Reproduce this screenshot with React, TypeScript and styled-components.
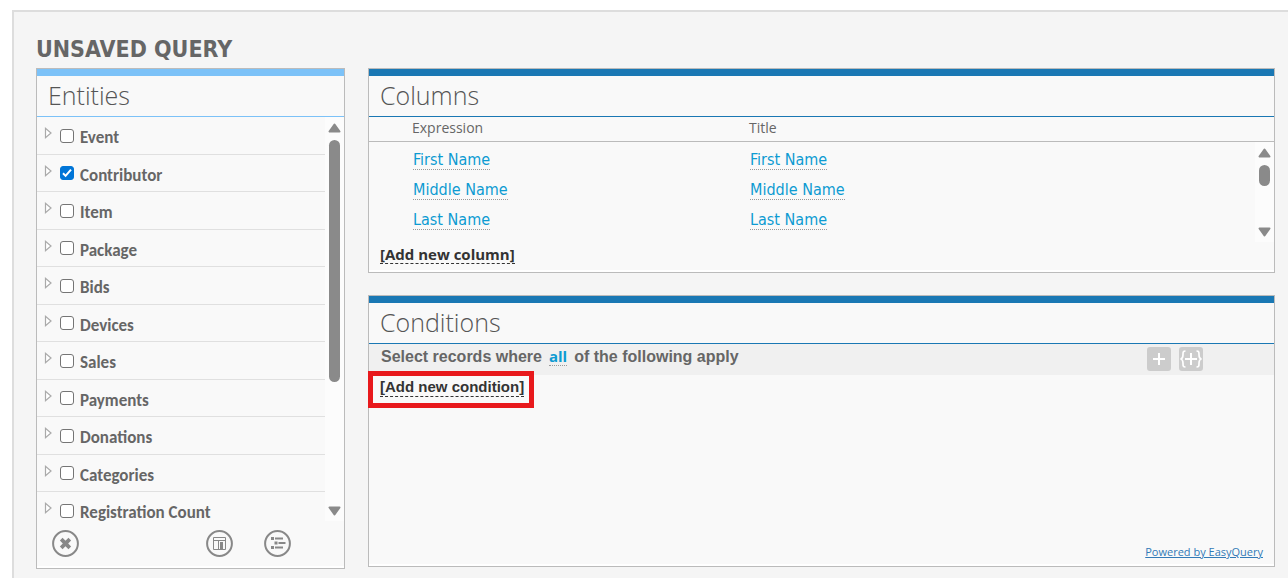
import React from "react";
import styled, { createGlobalStyle } from "styled-components";

const GlobalStyle = createGlobalStyle`
  * { box-sizing: border-box; }
  body { margin: 0; background: #fff; color: #666; font-family: "Open Sans", sans-serif; }
  button { margin: 0; padding: 0; border: 0; background: none; font: inherit; cursor: pointer; }
  h1, h2 { margin: 0; }
`;

const Frame = styled.main`
  margin: 10px 0 0 12px;
  padding: 22px 13px 24px 22px;
  min-height: calc(100vh - 10px);
  border: solid #ddd;
  border-width: 2px 0 0 2px;
  background: #f5f5f5;
`;

const PageTitle = styled.h1`
  font: bold 23px/30px "DejaVu Sans Condensed", "DejaVu Sans", sans-serif;
  margin-bottom: 4px;
`;

const Workspace = styled.div`
  display: grid;
  grid-template-columns: 309px minmax(0, 1fr);
  gap: 23px;
  align-items: start;
`;

const MainColumn = styled.div`
  display: flex;
  flex-direction: column;
  gap: 22px;
`;

const Panel = styled.section`
  display: flex;
  flex-direction: column;
  padding-bottom: 2px;
  border: 1px solid #bbb;
  background: linear-gradient(#f9f9f9, #f9f9f9) content-box, #fff;
`;

const PanelHeader = styled.header<{ $accent: string }>`
  padding: 0 0 2px 11px;
  border-top: 7px solid ${(p) => p.$accent};
  border-bottom: 1px solid ${(p) => p.$accent};
  h2 {
    font: 300 25px/38px "Open Sans", sans-serif;
    color: #555;
  }
`;

const ScrollArea = styled.div<{ $height: number }>`
  display: grid;
  grid-template-columns: minmax(0, 1fr) 19px;
  grid-template-rows: ${(p) => p.$height}px;
`;

const ScrollTrack = styled.div`
  display: flex;
  flex-direction: column;
  align-items: center;
  padding: 6px 0 5px;
  background: #fcfcfc;
`;

const ScrollThumb = styled.div<{ $size: number }>`
  width: 11px;
  height: ${(p) => p.$size}px;
  margin: 7px 0 auto;
  border-radius: 6px;
  background: #8a8a8a;
`;

const Expander = styled.button`
  display: flex;
  width: 10px;
  height: 12px;
  margin-top: 10px;
`;

const CheckBox = styled.input`
  appearance: none;
  flex: none;
  width: 14px;
  height: 14px;
  margin: 12px 6px 0 6px;
  border: 1px solid #757575;
  border-radius: 3px;
  background: #fff;
  &:checked {
    border-color: #0075d7;
    background: #0075d7 url("data:image/svg+xml,%3Csvg xmlns='http://www.w3.org/2000/svg' viewBox='0 0 12 12'%3E%3Cpath d='M2 6.3l2.6 2.6L10 2.6' fill='none' stroke='white' stroke-width='2'/%3E%3C/svg%3E") center / 12px no-repeat;
  }
`;

const EntityLabel = styled.label`
  font: bold 17px/21px Carlito, Calibri, Lato, sans-serif;
  padding-top: 10px;
`;

const EntityList = styled.ul`
  margin: 0;
  padding: 0;
  list-style: none;
`;

const EntityRow = styled.li`
  display: flex;
  height: 38px;
  padding-left: 7px;
  border-bottom: 1px solid #e0e0e0;
  &:nth-child(even) { height: 37px; }
  &:nth-child(even) ${CheckBox} { margin-top: 11px; }
  &:last-child { height: 29px; border-bottom: 0; }
`;

const EntityToolbar = styled.div`
  display: flex;
  align-items: center;
  height: 45px;
  padding: 0 53px 0 15px;
`;

const RoundButton = styled.button<{ $first?: boolean }>`
  display: flex;
  width: 27px;
  height: 27px;
  margin-left: 31px;
  ${(p) => p.$first && "margin: 0 auto 0 0;"}
`;

const ColumnsTable = styled.table`
  width: 100%;
  table-layout: fixed;
  border-collapse: collapse;
  border-spacing: 0;
  th, td { padding: 0; text-align: left; font-weight: 400; }
  th:first-child, td:first-child { width: 380px; padding-left: 43px; }
`;

const BodyTable = styled(ColumnsTable)`
  margin-top: 9px;
  th:first-child, td:first-child { width: 381px; padding-left: 44px; }
`;

const HeadBar = styled.div`
  padding-bottom: 2px;
  border-bottom: 1px solid #bbb;
`;

const HeadCell = styled.th`
  height: 22px;
  font-size: 14px;
  line-height: 22px;
`;

const BodyCell = styled.td`
  height: 30px;
  font: 16px/18px "DejaVu Sans Condensed", "DejaVu Sans", sans-serif;
  vertical-align: top;
`;

const ValueLink = styled.button<{ $strong?: boolean }>`
  color: #0d9bd2;
  line-height: 18px;
  border-bottom: 1px dotted #999;
  ${(p) => p.$strong && 'font: bold 15px/18px "Open Sans", sans-serif;'}
`;

const AddLink = styled.button<{ $arial?: boolean }>`
  font: bold 15px/18px ${(p) => (p.$arial ? '"Liberation Sans", Arial' : '"Open Sans"')}, sans-serif;
  color: #333;
  border-bottom: 1px dashed #333;
`;

const AddColumn = styled.div`
  display: flex;
  height: 28px;
  padding: 3px 0 0 11px;
  align-items: flex-start;
`;

const PredicateBar = styled.div`
  display: flex;
  justify-content: space-between;
  height: 31px;
  padding: 3px 71px 0 12px;
  background: #f0f0f0;
  font: bold 16px/19px "Liberation Sans", Arial, sans-serif;
`;

const PredicateText = styled.span`
  display: flex;
  align-items: flex-start;
  gap: 7px;
`;

const PredicateTools = styled.div`
  display: flex;
  gap: 8px;
`;

const ToolButton = styled.button`
  display: flex;
  width: 24px;
  height: 24px;
  border-radius: 3px;
  background: #ccc;
`;

const ConditionBody = styled.div`
  display: flex;
  height: 168px;
  padding: 3px 0 0 11px;
  align-items: flex-start;
`;

const Highlight = styled.div`
  position: relative;
  display: flex;
  &::after {
    content: "";
    position: absolute;
    inset: -7px -10px -11px -12px;
    border: 5px solid #e8191c;
    pointer-events: none;
  }
`;

const PanelFooter = styled.footer`
  display: flex;
  justify-content: flex-end;
  padding: 0 11px 3px 0;
  a { font-size: 11px; line-height: 18px; color: #337ab7; }
`;

const ENTITIES = [
  "Event", "Contributor", "Item", "Package", "Bids", "Devices",
  "Sales", "Payments", "Donations", "Categories", "Registration Count",
];
const COLUMNS = ["First Name", "Middle Name", "Last Name"];

const ScrollArrow = ({ down }: { down?: boolean }) => (
  <svg width="13" height="10" viewBox="0 0 13 10" fill="#8a8a8a" stroke="#8a8a8a" strokeWidth="2" strokeLinejoin="round">
    <path d={down ? "M1.5 1.5H11.5L6.5 8.5z" : "M1.5 8.5H11.5L6.5 1.5z"} />
  </svg>
);

const ScrollBar = ({ size }: { size: number }) => (
  <ScrollTrack aria-hidden="true">
    <ScrollArrow />
    <ScrollThumb $size={size} />
    <ScrollArrow down />
  </ScrollTrack>
);

const Ring = ({ children }: { children: React.ReactNode }) => (
  <svg width="27" height="27" viewBox="0 0 27 27" fill="none" stroke="#888">
    <circle cx="13.5" cy="13.5" r="12.4" strokeWidth="2" />
    {children}
  </svg>
);

export default function App() {
  return (
    <>
      <GlobalStyle />
      <Frame>
        <PageTitle>UNSAVED QUERY</PageTitle>
        <Workspace>
          <Panel>
            <PanelHeader $accent="#7cc2f8"><h2>Entities</h2></PanelHeader>
            <ScrollArea $height={404}>
              <EntityList>
                {ENTITIES.map((name, i) => (
                  <EntityRow key={name}>
                    <Expander type="button" aria-label={`Expand ${name}`}>
                      <svg width="10" height="12" viewBox="0 0 10 12" fill="#fff" stroke="#aaa" strokeWidth="1.2">
                        <path d="M1.5 1.3V10.7L7 6z" />
                      </svg>
                    </Expander>
                    <CheckBox type="checkbox" id={`entity-${i}`} defaultChecked={name === "Contributor"} />
                    <EntityLabel htmlFor={`entity-${i}`}>{name}</EntityLabel>
                  </EntityRow>
                ))}
              </EntityList>
              <ScrollBar size={242} />
            </ScrollArea>
            <EntityToolbar>
              <RoundButton type="button" aria-label="Clear selection" $first>
                <Ring><path d="M9.2 9.200l8.600 8.600M17.800 9.200l-8.600 8.600" strokeWidth="3.800" /></Ring>
              </RoundButton>
              <RoundButton type="button" aria-label="Add columns">
                <Ring>
                  <path d="M7.500 7.500h12v12h-12zM7 10.500h13M12.500 11v9" />
                  <path d="M15.500 12v8" strokeWidth="3" />
                </Ring>
              </RoundButton>
              <RoundButton type="button" aria-label="Add conditions">
                <Ring>
                  <path d="M7 8.500h3M10.500 13h3M7 17.500h3" strokeWidth="3" />
                  <path d="M11 8.500h8M14.500 13h7M11 17.500h8" strokeWidth="2" />
                </Ring>
              </RoundButton>
            </EntityToolbar>
          </Panel>

          <MainColumn>
            <Panel>
              <PanelHeader $accent="#1a78b4"><h2>Columns</h2></PanelHeader>
              <HeadBar>
                <ColumnsTable>
                  <thead>
                    <tr><HeadCell scope="col">Expression</HeadCell><HeadCell scope="col">Title</HeadCell></tr>
                  </thead>
                </ColumnsTable>
              </HeadBar>
              <ScrollArea $height={100}>
                <div>
                  <BodyTable aria-label="Selected columns">
                    <tbody>
                      {COLUMNS.map((name) => (
                        <tr key={name}>
                          <BodyCell><ValueLink type="button">{name}</ValueLink></BodyCell>
                          <BodyCell><ValueLink type="button">{name}</ValueLink></BodyCell>
                        </tr>
                      ))}
                    </tbody>
                  </BodyTable>
                </div>
                <ScrollBar size={21} />
              </ScrollArea>
              <AddColumn><AddLink type="button">[Add new column]</AddLink></AddColumn>
            </Panel>

            <Panel>
              <PanelHeader $accent="#1a78b4"><h2>Conditions</h2></PanelHeader>
              <PredicateBar>
                <PredicateText>
                  Select records where <ValueLink type="button" $strong>all</ValueLink> of the following apply
                </PredicateText>
                <PredicateTools>
                  <ToolButton type="button" aria-label="Add condition">
                    <svg width="24" height="24" viewBox="0 0 24 24" stroke="#fff" strokeWidth="2">
                      <path d="M12 6v12M6 12h12" />
                    </svg>
                  </ToolButton>
                  <ToolButton type="button" aria-label="Add group of conditions">
                    <svg width="24" height="24" viewBox="0 0 24 24" fill="none" stroke="#fff" strokeWidth="2">
                      <path d="M12 6v12M6 12h12" />
                      <path d="M6.500 4C4 4 4 5 4 7.500S4 11.500 1.500 12C4 12.500 4 14 4 16.500S4 20 6.500 20M17.500 4C20 4 20 5 20 7.500S20 11.500 22.500 12C20 12.500 20 14 20 16.500S20 20 17.500 20" strokeWidth="1.700" />
                    </svg>
                  </ToolButton>
                </PredicateTools>
              </PredicateBar>
              <ConditionBody>
                <Highlight><AddLink type="button" $arial>[Add new condition]</AddLink></Highlight>
              </ConditionBody>
              <PanelFooter><a href="#easyquery">Powered by EasyQuery</a></PanelFooter>
            </Panel>
          </MainColumn>
        </Workspace>
      </Frame>
    </>
  );
}
